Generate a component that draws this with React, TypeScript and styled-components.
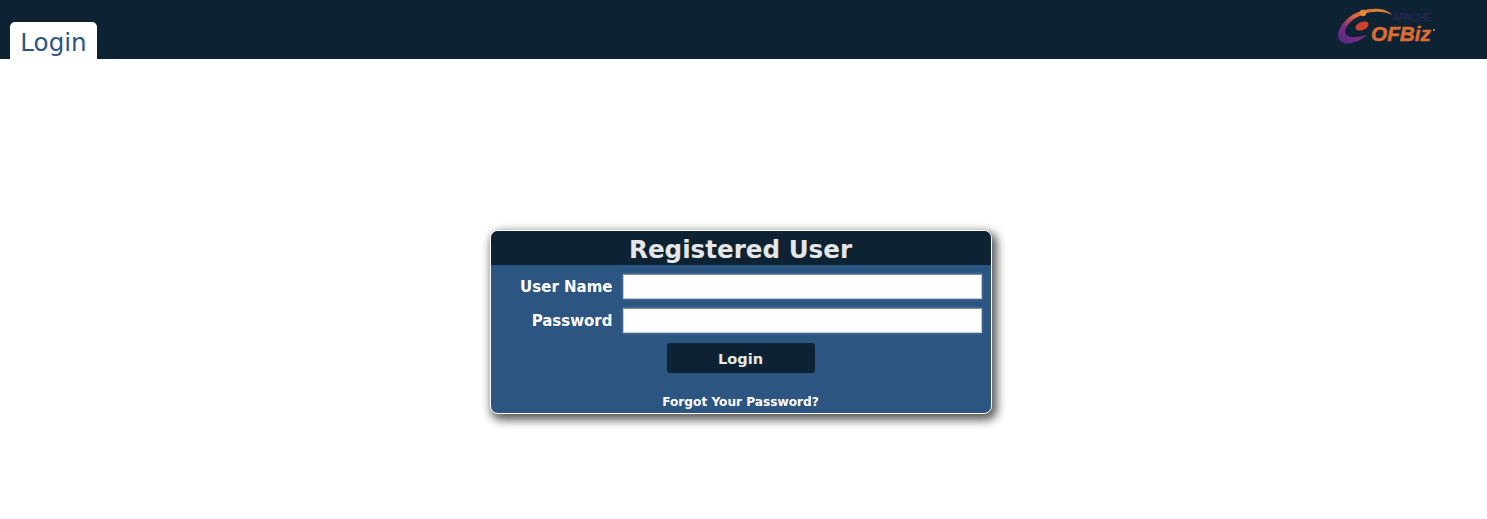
import React from "react";
import styled, { createGlobalStyle } from "styled-components";

const Global = createGlobalStyle`
  html, body { margin: 0; padding: 0; background: #fff; }
  body { font-family: "DejaVu Sans", Verdana, sans-serif; }
`;
const Page = styled.div`
  height: 519px;
  display: flex;
  flex-direction: column;
  overflow: hidden;
`;
const Header = styled.header`
  height: 59px;
  flex: none;
  background: #0d2233;
  display: flex;
  justify-content: space-between;
  align-items: flex-end;
  padding: 0 50px 0 10px;
`;
const Tab = styled.div`
  width: 87px;
  height: 37px;
  box-sizing: border-box;
  background: #fff;
  border-radius: 5px 5px 0 0;
  color: #2c5581;
  font-size: 24.6px;
  line-height: 42px;
  text-align: center;
`;
const Logo = styled.svg`
  display: block;
  align-self: flex-start;
  margin-top: 6px;
`;
const Main = styled.main`
  flex: 1;
  display: flex;
  justify-content: center;
  padding-top: 171px;
`;
const Card = styled.section`
  width: 502px;
  height: 184px;
  box-sizing: border-box;
  margin-right: 6px;
  background: #2c5581;
  border: 1px solid #fff;
  border-radius: 8px;
  overflow: hidden;
  box-shadow: 3px 4px 10px 2px rgba(0, 0, 0, 0.65);
`;
const Title = styled.h3`
  margin: 0;
  height: 34px;
  background: #0d2233;
  color: #e6e6e6;
  font-size: 24.6px;
  font-weight: bold;
  line-height: 38px;
  text-align: center;
`;
const Form = styled.form`
  display: flex;
  flex-direction: column;
  align-items: stretch;
  padding-top: 9px;
`;
const Row = styled.div`
  display: flex;
  align-items: center;
  height: 25px;
  margin-bottom: 9px;
`;
const Label = styled.label`
  width: 122px;
  text-align: right;
  color: #fff;
  font-size: 15px;
  font-weight: bold;
  margin-right: 10px;
  flex: none;
`;
const Field = styled.input`
  width: 359px;
  height: 25px;
  box-sizing: border-box;
  background: #fff;
  border: 1px solid;
  border-color: #8a8a8a #c8c8c8 #c8c8c8 #c8c8c8;
  padding: 0;
  margin: 0;
  box-shadow: 0 0 3px rgba(120, 160, 200, 0.6);
`;
const Submit = styled.button`
  align-self: center;
  width: 148px;
  height: 30px;
  margin: 1px 0 0 0;
  padding: 0;
  border: none;
  border-radius: 3px;
  background: #0d2233;
  color: #e6e6e6;
  font-family: "DejaVu Sans", sans-serif;
  font-size: 14.6px;
  font-weight: bold;
`;
const Forgot = styled.a`
  display: block;
  text-align: center;
  margin-top: 21px;
  color: #fff;
  font-size: 12.15px;
  font-weight: bold;
  line-height: 16px;
  text-decoration: none;
`;

export default function App() {
  return (
    <>
      <Global />
      <Page>
        <Header>
          <Tab>Login</Tab>
          <Logo width="100" height="40" viewBox="0 0 100 40">
            <defs>
              <linearGradient id="sw" x1="0" y1="1" x2="1" y2="0">
                <stop offset="0" stopColor="#4a2a86" />
                <stop offset="0.3" stopColor="#7f2c80" />
                <stop offset="0.55" stopColor="#d8683a" />
                <stop offset="1" stopColor="#e08a3a" />
              </linearGradient>
            </defs>
            <path d="M1 28C3 17 14 8 24 5C36 1 50 2 55 9C47 5 36 5 27 8C16 12 8 20 8 26C8 31 16 33 30 29C22 36 12 39 7 37C3 36 1 33 1 28Z" fill="url(#sw)" />
            <circle cx="26" cy="7" r="3.2" fill="#e08a3a" />
            <ellipse cx="25" cy="20" rx="7" ry="4" transform="rotate(-22 25 20)" fill="#d0402f" />
            <text x="55" y="15" fontFamily="'Liberation Sans', sans-serif" fontSize="10.5" fill="#2c2a5c" textLength="40">APACHE</text>
            <text x="34" y="35" fontFamily="'Liberation Sans', sans-serif" fontSize="21" fontWeight="bold" fontStyle="italic" fill="#dd6d33" stroke="#dd6d33" strokeWidth="0.5" textLength="60" lengthAdjust="spacingAndGlyphs">OFBiz</text>
            <circle cx="97" cy="24" r="1" fill="#c8a080" />
          </Logo>
        </Header>
        <Main>
          <Card>
            <Title>Registered User</Title>
            <Form>
              <Row>
                <Label>User Name</Label>
                <Field type="text" />
              </Row>
              <Row>
                <Label>Password</Label>
                <Field type="password" />
              </Row>
              <Submit type="button">Login</Submit>
              <Forgot href="#">Forgot Your Password?</Forgot>
            </Form>
          </Card>
        </Main>
      </Page>
    </>
  );
}
